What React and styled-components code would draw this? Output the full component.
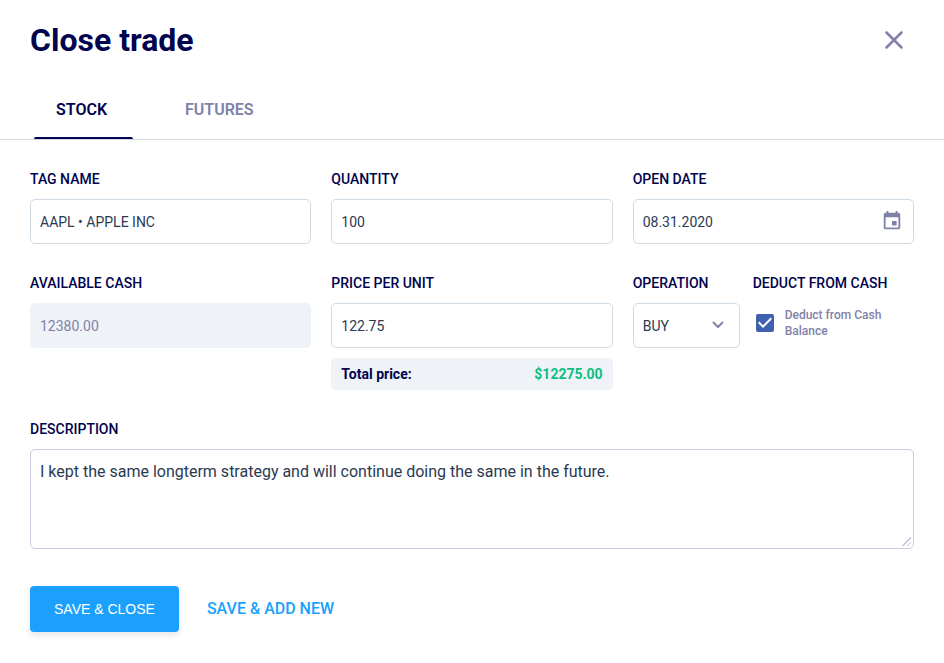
import { useState } from 'react';
import styled, { createGlobalStyle } from 'styled-components';
import { MdCheckBox, MdCheckBoxOutlineBlank, MdEvent } from 'react-icons/md';

const Navy = '#00034d';
const Muted = '#8081a9';
const Text = '#2b3a52';
const Border = '#d0dae4';
const LightGrey = '#eff3f8';
const Blue = '#1ba1fd';
const Green = '#0bbf82';

const GlobalStyle = createGlobalStyle`
    * {
        box-sizing: border-box;
    }

    body {
        margin: 0;
        background: #fff;
        color: ${Navy};
        font-family: Roboto, sans-serif;
    }

    button,
    input,
    select,
    textarea {
        margin: 0;
        font-family: inherit;
    }
`;

/** Title and close button */
const Header = styled.header`
    display: flex;
    align-items: center;
    justify-content: space-between;
    height: 80px;
    padding: 0 40px 0 30px;
`;

const Title = styled.h1`
    margin: 0;
    font-size: 32px;
    line-height: 40px;
    font-weight: 700;
`;

const CloseButton = styled.button`
    display: flex;
    padding: 0;
    border: none;
    background: none;
    color: ${Muted};
    cursor: pointer;
`;

/** Tab bar, the line under it takes the full width */
const Tabs = styled.div`
    display: flex;
    gap: 30px;
    height: 60px;
    padding: 0 34px;
    border-bottom: 1px solid ${Border};
`;

const Tab = styled.button`
    display: flex;
    flex-direction: column;
    justify-content: space-between;
    min-width: 99px;
    padding: 20px 0 0;
    border: none;
    background: none;
    color: ${(props) => (props.$active ? Navy : Muted)};
    font-size: 16px;
    line-height: 20px;
    font-weight: 600;
    text-align: left;
    cursor: pointer;

    span {
        padding: 0 22px;
    }

    &::after {
        content: '';
        width: 100%;
        height: 2px;
        border-radius: 2px 2px 0 0;
        background: ${(props) => (props.$active ? Navy : 'transparent')};
    }
`;

const Form = styled.form`
    display: flex;
    flex-direction: column;
    gap: 30px;
    padding: 30px;
`;

/** Three equal columns of fields */
const Fields = styled.div`
    display: grid;
    grid-template-columns: repeat(3, minmax(0, 1fr));
    gap: 30px 20px;
    align-items: start;
`;

/** Operation and deduct share the last column */
const SplitField = styled.div`
    display: grid;
    grid-template-columns: 107px 1fr;
    gap: 13px;
`;

const Field = styled.div`
    display: flex;
    flex-direction: column;
    gap: 10px;
    min-width: 0;
`;

const Label = styled.label`
    font-size: 14px;
    line-height: 19px;
    font-weight: 500;
    white-space: nowrap;
`;

const Input = styled.input`
    width: 100%;
    height: 45px;
    padding: 0 9px;
    border: 1px solid ${Border};
    border-radius: 5px;
    background: #fff;
    color: ${Text};
    font-size: 14px;
    outline: none;

    &:disabled {
        border-color: ${LightGrey};
        background: ${LightGrey};
        color: ${Muted};
    }
`;

/** Stacks a control and its icon in the same cell */
const IconField = styled.div`
    display: grid;
    align-items: center;
    color: ${Muted};

    > * {
        grid-area: 1 / 1;
    }

    > svg {
        justify-self: end;
        margin-right: ${(props) => props.$inset};
        margin-bottom: 2px;
        pointer-events: none;
    }
`;

const Select = styled.select`
    width: 100%;
    height: 45px;
    padding: 0 9px;
    border: 1px solid ${Border};
    border-radius: 5px;
    background: #fff;
    color: ${Text};
    font-size: 14px;
    appearance: none;
    outline: none;
`;

const Total = styled.div`
    display: flex;
    align-items: center;
    justify-content: space-between;
    height: 32px;
    padding: 0 10px;
    border-radius: 5px;
    background: ${LightGrey};
    font-size: 14px;
    font-weight: 700;
`;

const Price = styled.output`
    color: ${Green};
`;

const CheckField = styled.label`
    display: flex;
    align-items: center;
    gap: 8px;
    height: 40px;
    color: ${Muted};
    font-size: 12px;
    line-height: 16px;
    font-weight: 500;
    cursor: pointer;
`;

const CheckBox = styled.span`
    display: grid;
    flex: none;
    color: #3f61ae;

    > * {
        grid-area: 1 / 1;
    }

    input {
        width: 24px;
        height: 24px;
        opacity: 0;
    }
`;

const Textarea = styled.textarea`
    display: block;
    width: 100%;
    height: 100px;
    padding: 12px 9px;
    border: 1px solid #cccce0;
    border-radius: 5px;
    color: ${Text};
    font-size: 16px;
    line-height: 20px;
    resize: vertical;
    outline: none;

    &::-webkit-resizer {
        background: linear-gradient(
                135deg,
                transparent 48%,
                #c4c4dc 48%,
                #c4c4dc 57%,
                transparent 57%,
                transparent 73%,
                #c4c4dc 73%,
                #c4c4dc 82%,
                transparent 82%
            )
            4px 4px / 9px 9px no-repeat;
    }
`;

const Actions = styled.div`
    display: flex;
    align-items: center;
    gap: 28px;
    padding-top: 7px;
`;

const SaveButton = styled.button`
    height: 46px;
    padding: 0 24px;
    border: none;
    border-radius: 4px;
    background: ${Blue};
    box-shadow: 0 3px 6px rgba(0, 0, 0, 0.1);
    color: #fff;
    font-family: 'Liberation Sans', Arial, sans-serif;
    font-size: 14px;
    cursor: pointer;
`;

const LinkButton = styled.button`
    padding: 0;
    border: none;
    background: none;
    color: ${Blue};
    font-size: 16px;
    line-height: 20px;
    font-weight: 500;
    cursor: pointer;
`;

const CloseIcon = () => (
    <svg width="20" height="20" viewBox="0 0 20 20" aria-hidden="true">
        <path
            d="M2.5 2.5l15 15M17.5 2.5l-15 15"
            fill="none"
            stroke="currentColor"
            strokeWidth="2.6"
            strokeLinecap="round"
        />
    </svg>
);

const ChevronIcon = () => (
    <svg width="12" height="8" viewBox="0 0 12 8" aria-hidden="true">
        <path
            d="M1.5 1.5L6 6l4.5-4.5"
            fill="none"
            stroke="currentColor"
            strokeWidth="1.8"
            strokeLinecap="round"
            strokeLinejoin="round"
        />
    </svg>
);

const App = () => {
    const [tab, setTab] = useState('STOCK');
    const [quantity, setQuantity] = useState('100');
    const [price, setPrice] = useState('122.75');
    const [deduct, setDeduct] = useState(true);

    return (
        <main>
            <GlobalStyle />
            <Header>
                <Title>Close trade</Title>
                <CloseButton type="button" aria-label="Close">
                    <CloseIcon />
                </CloseButton>
            </Header>
            <Tabs role="tablist">
                {['STOCK', 'FUTURES'].map((name) => (
                    <Tab
                        key={name}
                        type="button"
                        role="tab"
                        aria-selected={tab === name}
                        $active={tab === name}
                        onClick={() => setTab(name)}
                    >
                        <span>{name}</span>
                    </Tab>
                ))}
            </Tabs>
            <Form onSubmit={(e) => e.preventDefault()}>
                <Fields>
                    <Field>
                        <Label htmlFor="tag">TAG NAME</Label>
                        <Input id="tag" defaultValue="AAPL • APPLE INC" />
                    </Field>
                    <Field>
                        <Label htmlFor="quantity">QUANTITY</Label>
                        <Input
                            id="quantity"
                            value={quantity}
                            onChange={(e) => setQuantity(e.target.value)}
                        />
                    </Field>
                    <Field>
                        <Label htmlFor="date">OPEN DATE</Label>
                        <IconField $inset="11px">
                            <Input id="date" defaultValue="08.31.2020" />
                            <MdEvent size={22} />
                        </IconField>
                    </Field>
                    <Field>
                        <Label htmlFor="cash">AVAILABLE CASH</Label>
                        <Input id="cash" defaultValue="12380.00" disabled />
                    </Field>
                    <Field>
                        <Label htmlFor="price">PRICE PER UNIT</Label>
                        <Input
                            id="price"
                            value={price}
                            onChange={(e) => setPrice(e.target.value)}
                        />
                        <Total>
                            <span>Total price:</span>
                            <Price htmlFor="quantity price">
                                ${(quantity * price).toFixed(2)}
                            </Price>
                        </Total>
                    </Field>
                    <SplitField>
                        <Field>
                            <Label htmlFor="operation">OPERATION</Label>
                            <IconField $inset="16px">
                                <Select id="operation" defaultValue="BUY">
                                    <option>BUY</option>
                                    <option>SELL</option>
                                </Select>
                                <ChevronIcon />
                            </IconField>
                        </Field>
                        <Field>
                            <Label htmlFor="deduct">DEDUCT FROM CASH</Label>
                            <CheckField>
                                <CheckBox>
                                    {deduct ? (
                                        <MdCheckBox size={24} />
                                    ) : (
                                        <MdCheckBoxOutlineBlank size={24} />
                                    )}
                                    <input
                                        id="deduct"
                                        type="checkbox"
                                        checked={deduct}
                                        onChange={(e) =>
                                            setDeduct(e.target.checked)
                                        }
                                    />
                                </CheckBox>
                                Deduct from Cash Balance
                            </CheckField>
                        </Field>
                    </SplitField>
                </Fields>
                <Field>
                    <Label htmlFor="description">DESCRIPTION</Label>
                    <Textarea
                        id="description"
                        defaultValue="I kept the same longterm strategy and will continue doing the same in the future."
                    />
                </Field>
                <Actions>
                    <SaveButton type="submit">SAVE &amp; CLOSE</SaveButton>
                    <LinkButton type="button">SAVE &amp; ADD NEW</LinkButton>
                </Actions>
            </Form>
        </main>
    );
};

export default App;
